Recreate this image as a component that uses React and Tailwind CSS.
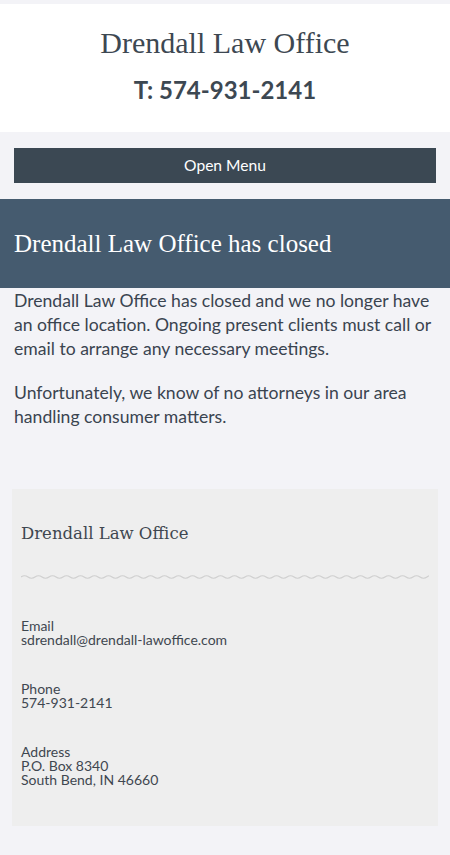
import React from "react";

const sans = { fontFamily: "Lato, 'Open Sans', sans-serif" };
const serif = { fontFamily: "'Liberation Serif', 'DejaVu Serif', serif" };
const slab = { fontFamily: "'DejaVu Serif', 'Liberation Serif', serif" };

function Wave() {
  // gentle squiggle divider across the card
  const w = 408;
  const period = 14;
  let d = "M0 3";
  for (let x = 0; x < w; x += period) {
    d += ` Q${x + period / 4} 0.5 ${x + period / 2} 3 T${x + period} 3`;
  }
  return (
    <svg width="100%" height="6" viewBox={`0 0 ${w} 6`} preserveAspectRatio="none" className="block">
      <path d={d} fill="none" stroke="#cfcfcf" strokeWidth="1.2" />
    </svg>
  );
}

function Info({ label, lines }) {
  return (
    <div className="text-[14px] leading-[14px] text-[#3f4750]" style={sans}>
      <div>{label}</div>
      {lines.map((l) => (
        <div key={l}>{l}</div>
      ))}
    </div>
  );
}

export default function App() {
  return (
    <div className="min-h-[855px] bg-[#f3f3f7] pt-[4px]">
      <header className="bg-white h-[128px] flex flex-col items-center pt-[20px]">
        <h1 className="text-[30px] leading-[38px] text-[#3d4852]" style={serif}>
          Drendall Law Office
        </h1>
        <div className="mt-[13px] text-[24px] leading-[30px] font-bold text-[#3d4852]" style={sans}>
          T: 574-931-2141
        </div>
      </header>

      <nav className="px-[14px] pt-[16px] pb-[16px]">
        <button className="w-full h-[35px] bg-[#3b4853] text-white text-[15.6px]" style={sans}>
          Open Menu
        </button>
      </nav>

      <section className="bg-[#455b6f] h-[89px] flex items-center px-[14px]">
        <h2 className="text-[25px] leading-[32px] text-white" style={serif}>
          Drendall Law Office has closed
        </h2>
      </section>

      <main className="px-[14px] pt-[1px] text-[17.6px] leading-[24px] text-[#3a4450]" style={sans}>
        <p>
          Drendall Law Office has closed and we no longer have an office location. Ongoing present clients must call or
          email to arrange any necessary meetings.
        </p>
        <p className="mt-[20px]">Unfortunately, we know of no attorneys in our area handling consumer matters.</p>
      </main>

      <aside className="mx-[12px] mt-[60px] bg-[#eeeeee] h-[337px] px-[9px] pt-[33px]">
        <h3 className="text-[16.5px] leading-[24px] text-[#3f4750]" style={slab}>
          Drendall Law Office
        </h3>
        <div className="mt-[28px]">
          <Wave />
        </div>
        <div className="mt-[39px] flex flex-col gap-[35px]">
          <Info label="Email" lines={["sdrendall@drendall-lawoffice.com"]} />
          <Info label="Phone" lines={["574-931-2141"]} />
          <Info label="Address" lines={["P.O. Box 8340", "South Bend, IN 46660"]} />
        </div>
      </aside>
    </div>
  );
}
